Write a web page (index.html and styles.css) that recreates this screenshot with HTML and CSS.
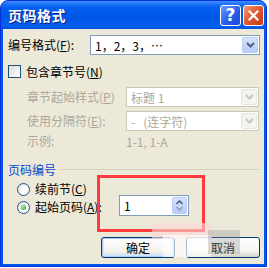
FILE: index.html
```html
<!DOCTYPE html>
<html>
<head>
    <meta charset="UTF-8">
    <title>页码格式</title>
    <link rel="stylesheet" href="styles.css">
</head>
<body>
    <div class="window">
        <div class="titlebar">
            <span class="title">页码格式</span>
            <span class="tbBtn help">?</span>
            <span class="tbBtn close">
                <svg width="11" height="11" viewBox="0 0 11 11"><path d="M1.5 1.5 L9.5 9.5 M9.5 1.5 L1.5 9.5" stroke="#fff" stroke-width="2.2" stroke-linecap="square"/></svg>
            </span>
        </div>
        <div class="content">
            <div class="row rowFormat">
                <span class="lbl lblFormat">编号格式(<u>F</u>):</span>
                <div class="combo comboFormat">
                    <span class="val">1，2，3，…</span>
                    <span class="drop">
                        <svg width="9" height="6" viewBox="0 0 9 6"><path d="M1 1 L4.5 4.5 L8 1" fill="none" stroke="#4D6185" stroke-width="2"/></svg>
                    </span>
                </div>
            </div>
            <div class="row rowCheck">
                <span class="checkbox"></span>
                <span class="lbl">包含章节号(<u>N</u>)</span>
            </div>
            <div class="row rowStyle off">
                <span class="lbl lblSub">章节起始样式(<u>P</u>)</span>
                <div class="combo comboSub">
                    <span class="val">标题 1</span>
                    <span class="drop">
                        <svg width="9" height="6" viewBox="0 0 9 6"><path d="M1 1 L4.5 4.5 L8 1" fill="none" stroke="#C9C7BA" stroke-width="2"/></svg>
                    </span>
                </div>
            </div>
            <div class="row rowSep off">
                <span class="lbl lblSub">使用分隔符(<u>E</u>):</span>
                <div class="combo comboSub">
                    <span class="val">-&nbsp;&nbsp;&nbsp;(连字符)</span>
                    <span class="drop">
                        <svg width="9" height="6" viewBox="0 0 9 6"><path d="M1 1 L4.5 4.5 L8 1" fill="none" stroke="#C9C7BA" stroke-width="2"/></svg>
                    </span>
                </div>
            </div>
            <div class="row rowExample off">
                <span class="lbl lblSub">示例:</span>
                <span class="example">1-1, 1-A</span>
            </div>
            <div class="group">
                <span class="groupTitle">页码编号</span>
                <span class="groupLine"></span>
            </div>
            <div class="row rowRadio1">
                <span class="radio"></span>
                <span class="lbl">续前节(<u>C</u>)</span>
            </div>
            <div class="row rowRadio2">
                <span class="radio checked"></span>
                <span class="lbl lblStart">起始页码(<u>A</u>):</span>
                <div class="spin">
                    <span class="val">1</span>
                    <span class="spinBtn">
                        <svg width="9" height="13" viewBox="0 0 9 13"><path d="M1.5 5 L4.5 2 L7.5 5" fill="none" stroke="#4D6185" stroke-width="1.6"/><path d="M1.5 8 L4.5 11 L7.5 8" fill="none" stroke="#8A9CC0" stroke-width="1.6"/></svg>
                    </span>
                </div>
            </div>
            <div class="buttons">
                <button class="btn default">确定</button>
                <button class="btn">取消</button>
            </div>

            <div class="mark"></div>
            <div class="blur b1"></div>
            <div class="blur b2"></div>
            <div class="blur b3"></div>
        </div>
    </div>
</body>
</html>
```
FILE: styles.css
```css
* {
    box-sizing: border-box;
}
body {
    margin: 0;
    background: #fff;
    font-family: "Noto Sans CJK SC", "Noto Sans", sans-serif;
    font-size: 12px;
    color: #000;
}
.window {
    width: 267px;
    height: 267px;
    display: flex;
    flex-direction: column;
    background: #0058EE;
    border: 1px solid #0831D9;
    border-radius: 8px 8px 0 0;
}
.titlebar {
    height: 28px;
    display: flex;
    align-items: center;
    padding: 0 2px 0 7px;
    border-radius: 7px 7px 0 0;
    background: linear-gradient(#3C8CFF 0%, #2A7BFA 8%, #0662F0 20%, #0058E8 45%, #0057E6 70%, #0461F4 88%, #0050DC 100%);
}
.title {
    flex: 1;
    color: #fff;
    font-weight: bold;
    font-size: 14px;
    text-shadow: 1px 1px 0 #0A1C7A;
    letter-spacing: 0.5px;
}
.tbBtn {
    width: 21px;
    height: 21px;
    margin-left: 2px;
    border: 1px solid #fff;
    border-radius: 3px;
    display: flex;
    align-items: center;
    justify-content: center;
    color: #fff;
}
.help {
    background: linear-gradient(135deg, #6A9BFF, #2359E8 60%, #1C4CD6);
    font: bold 17px "DejaVu Sans", sans-serif;
}
.close {
    background: linear-gradient(135deg, #F29A7A, #E0552E 50%, #C63D18);
}
.content {
    position: relative;
    flex: 1;
    margin: 0 2px 2px;
    background: #ECE9D8;
    padding: 0 4px 0 5px;
    display: flex;
    flex-direction: column;
}
.row {
    display: flex;
    align-items: center;
}
.lbl {
    white-space: nowrap;
    line-height: 14px;
}
u {
    text-decoration: underline;
    text-underline-offset: 1px;
}
.off {
    color: #ACA899;
}
.rowFormat {
    margin-top: 6px;
    height: 20px;
}
.lblFormat {
    width: 82px;
}
.combo {
    height: 20px;
    border: 1px solid #7F9DB9;
    background: #fff;
    display: flex;
    align-items: center;
    padding: 1px;
}
.combo .val {
    flex: 1;
    padding-left: 3px;
}
.comboFormat {
    width: 170px;
}
.drop {
    width: 16px;
    height: 16px;
    border: 1px solid #B9CCF5;
    border-radius: 2px;
    background: linear-gradient(#D6E2FC, #B8CCF8);
    display: flex;
    align-items: center;
    justify-content: center;
}
.rowCheck {
    margin-top: 10px;
    height: 13px;
}
.checkbox {
    width: 13px;
    height: 13px;
    border: 1px solid #1C5180;
    background: linear-gradient(135deg, #DCDCD7, #fff);
    margin-right: 5px;
}
.rowStyle {
    margin-top: 9px;
    height: 20px;
}
.rowSep {
    margin-top: 4px;
    height: 20px;
}
.lblSub {
    width: 118px;
    padding-left: 19px;
}
.comboSub {
    width: 133px;
    border-color: #C9C7BA;
}
.comboSub .drop {
    border-color: #E8E6DC;
    background: #F4F3EE;
}
.rowExample {
    margin-top: 3px;
    height: 14px;
}
.example {
    padding-left: 0;
}
.group {
    margin-top: 14px;
    height: 14px;
    display: flex;
    align-items: center;
}
.groupTitle {
    color: #0046D5;
    margin-right: 4px;
}
.groupLine {
    flex: 1;
    height: 1px;
    background: #D0D0BF;
    margin-right: 1px;
}
.rowRadio1 {
    margin-top: 7px;
    height: 12px;
}
.rowRadio2 {
    height: 21px;
}
.radio {
    width: 13px;
    height: 13px;
    margin-left: 9px;
    margin-right: 5px;
    border: 1px solid #1C5180;
    border-radius: 50%;
    background: radial-gradient(circle at 65% 65%, #fff 30%, #DCDCD7);
    display: flex;
    align-items: center;
    justify-content: center;
}
.rowRadio2 .radio {
    margin-top: 3px;
}
.checked::after {
    content: "";
    width: 5px;
    height: 5px;
    border-radius: 50%;
    background: radial-gradient(circle at 40% 40%, #A6E69A, #21A121);
}
.lblStart {
    width: 84px;
    margin-top: 3px;
}
.spin {
    width: 70px;
    height: 21px;
    border: 1px solid #7F9DB9;
    background: #fff;
    display: flex;
    align-items: center;
    padding: 1px;
}
.spin .val {
    flex: 1;
    padding-left: 3px;
}
.spinBtn {
    width: 15px;
    height: 17px;
    border: 1px solid #B9CCF5;
    border-radius: 2px;
    background: linear-gradient(#D6E2FC, #B8CCF8);
    display: flex;
    align-items: center;
    justify-content: center;
}
.buttons {
    margin-top: 21px;
    display: flex;
    justify-content: flex-end;
    gap: 11px;
}
.btn {
    width: 74px;
    height: 21px;
    padding: 0;
    font: 12px "Noto Sans CJK SC", sans-serif;
    color: #000;
    border: 1px solid #003C74;
    border-radius: 3px;
    background: linear-gradient(#FFFFFF, #F3F3EF 70%, #D6D0C5);
}
.default {
    box-shadow: inset 0 0 0 1px #B4C8F4, inset 0 -1px 0 2px #CEE7FF;
}
.mark {
    position: absolute;
    left: 94px;
    top: 146px;
    width: 108px;
    height: 57px;
    border: 3px solid #FF3B3B;
}
.blur {
    position: absolute;
}
.b1 {
    left: 149px;
    top: 194px;
    width: 60px;
    height: 16px;
    background: rgba(250, 215, 215, 0.6);
}
.b2 {
    left: 160px;
    top: 206px;
    width: 48px;
    height: 22px;
    background: rgba(255, 255, 255, 0.65);
}
.b3 {
    left: 205px;
    top: 201px;
    width: 32px;
    height: 24px;
    background: rgba(150, 150, 150, 0.35);
}
```
